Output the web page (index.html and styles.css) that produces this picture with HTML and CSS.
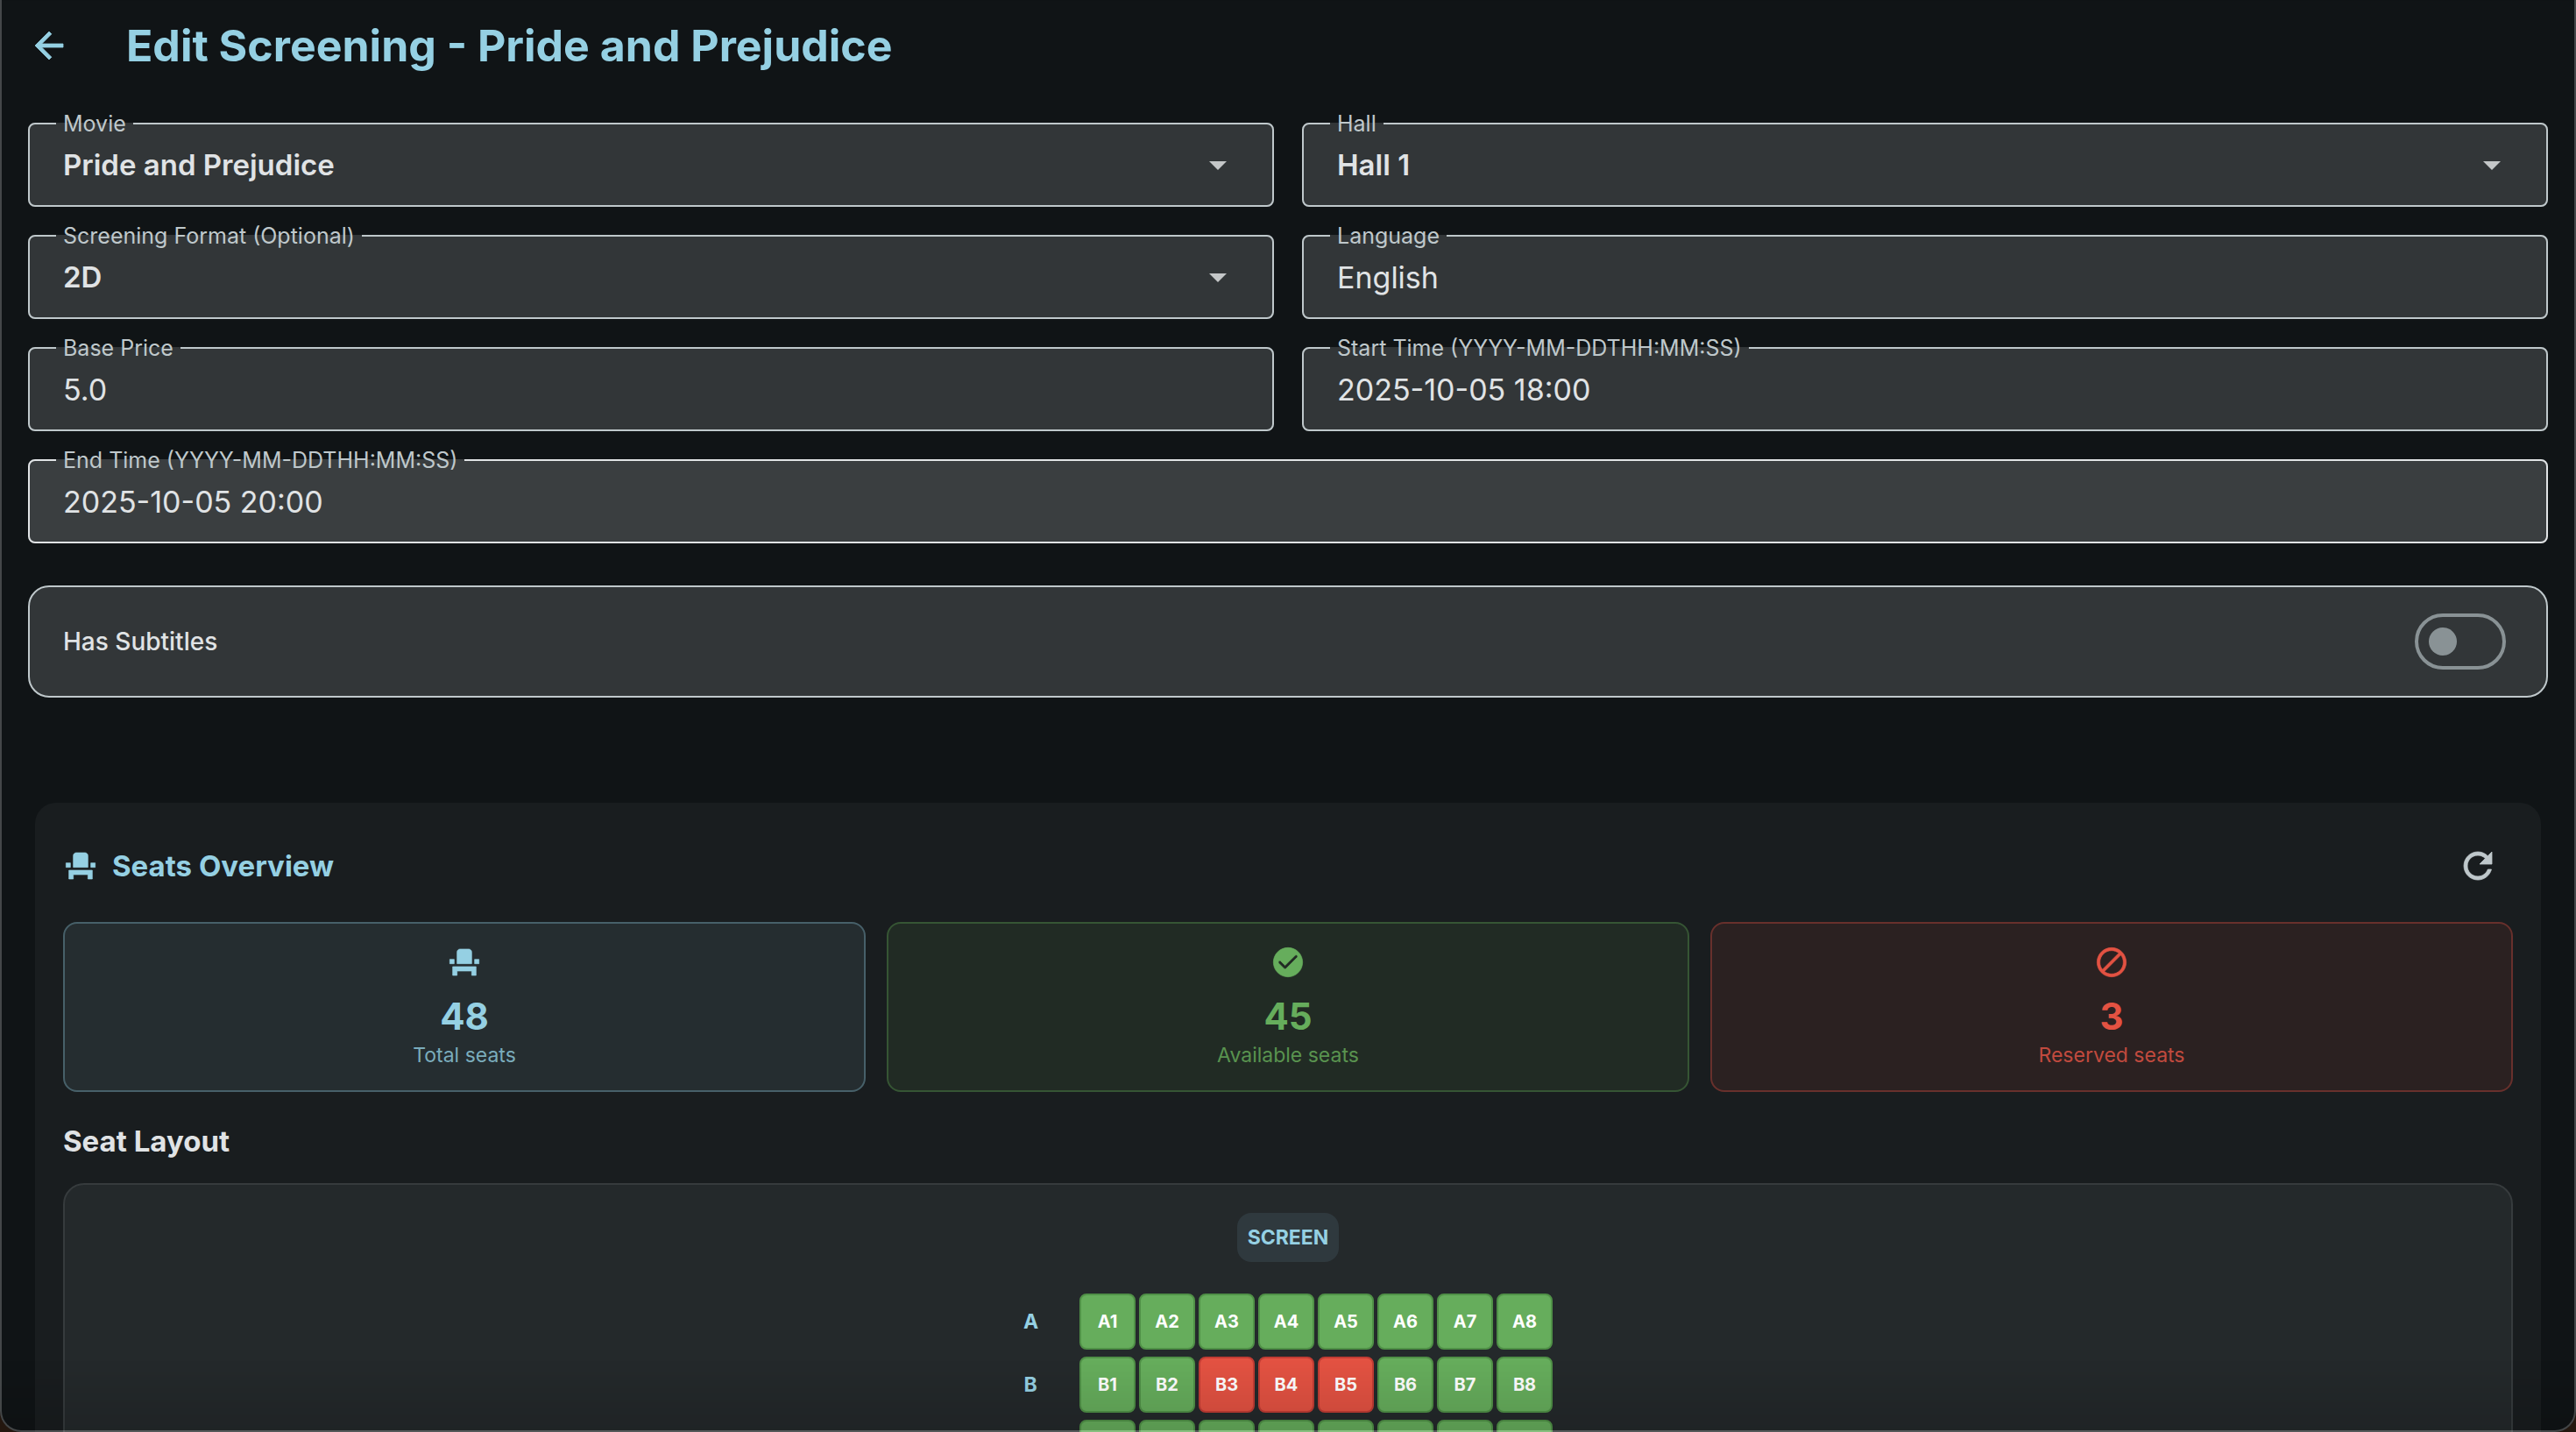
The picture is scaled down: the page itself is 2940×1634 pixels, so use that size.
FILE: index.html
```html
<!DOCTYPE html>
<html lang="en">
<head>
<meta charset="utf-8">
<meta name="viewport" content="width=device-width, initial-scale=1">
<title>Edit Screening</title>
<link rel="stylesheet" href="styles.css">
</head>
<body>
<svg class="sprite" aria-hidden="true">
  <symbol id="seat" viewBox="0 0 24 24"><path d="M4 18v3h3v-3h10v3h3v-6H4zm15-8h3v3h-3zM2 10h3v3H2zm15 3H7V5c0-1.1.9-2 2-2h6c1.1 0 2 .9 2 2v8z"/></symbol>
  <symbol id="caret" viewBox="0 0 24 24"><path d="M7 10l5 5 5-5z"/></symbol>
</svg>
<div class="window">
  <header class="topbar">
    <button class="icon-button back" type="button" aria-label="Back">
      <svg class="icon icon-lg icon-bold" viewBox="0 0 24 24"><path d="M20 11H7.83l5.59-5.59L12 4l-8 8 8 8 1.41-1.41L7.83 13H20v-2z"/></svg>
    </button>
    <h1 class="title">Edit Screening - Pride and Prejudice</h1>
  </header>

  <main>
    <form class="form">
      <fieldset class="field">
        <legend class="legend"><label for="movie">Movie</label></legend>
        <div class="control">
          <select class="value select" id="movie"><option>Pride and Prejudice</option></select>
          <svg class="icon icon-lg caret"><use href="#caret"/></svg>
        </div>
      </fieldset>
      <fieldset class="field">
        <legend class="legend"><label for="hall">Hall</label></legend>
        <div class="control">
          <select class="value select" id="hall"><option>Hall 1</option></select>
          <svg class="icon icon-lg caret"><use href="#caret"/></svg>
        </div>
      </fieldset>
      <fieldset class="field">
        <legend class="legend"><label for="format">Screening Format (Optional)</label></legend>
        <div class="control">
          <select class="value select" id="format"><option>2D</option></select>
          <svg class="icon icon-lg caret"><use href="#caret"/></svg>
        </div>
      </fieldset>
      <fieldset class="field">
        <legend class="legend"><label for="language">Language</label></legend>
        <div class="control"><input class="value" id="language" type="text" value="English"></div>
      </fieldset>
      <fieldset class="field">
        <legend class="legend"><label for="price">Base Price</label></legend>
        <div class="control"><input class="value" id="price" type="text" value="5.0"></div>
      </fieldset>
      <fieldset class="field">
        <legend class="legend"><label for="start">Start Time (YYYY-MM-DDTHH:MM:SS)</label></legend>
        <div class="control"><input class="value" id="start" type="text" value="2025-10-05 18:00"></div>
      </fieldset>
      <fieldset class="field field-wide field-active">
        <legend class="legend"><label for="end">End Time (YYYY-MM-DDTHH:MM:SS)</label></legend>
        <div class="control"><input class="value" id="end" type="text" value="2025-10-05 20:00"></div>
      </fieldset>
      <div class="subtitles">
        <label for="subtitles">Has Subtitles</label>
        <input class="switch" id="subtitles" type="checkbox" role="switch">
      </div>
    </form>

    <section class="overview">
      <div class="overview-head">
        <svg class="icon icon-bold"><use href="#seat"/></svg>
        <h2 class="overview-title">Seats Overview</h2>
        <button class="icon-button refresh" type="button" aria-label="Refresh">
          <svg class="icon icon-lg icon-bold" viewBox="0 0 24 24"><path d="M17.65 6.35C16.2 4.9 14.21 4 12 4c-4.42 0-7.99 3.58-7.99 8s3.57 8 7.99 8c3.73 0 6.84-2.55 7.73-6h-2.08c-.82 2.33-3.04 4-5.65 4-3.31 0-6-2.69-6-6s2.69-6 6-6c1.66 0 3.14.69 4.22 1.78L13 11h7V4l-2.35 2.35z"/></svg>
        </button>
      </div>

      <div class="stats">
        <div class="stat stat-total">
          <svg class="icon icon-bold"><use href="#seat"/></svg>
          <strong class="stat-number">48</strong>
          <span class="stat-label">Total seats</span>
        </div>
        <div class="stat stat-available">
          <svg class="icon icon-bold" viewBox="0 0 24 24"><path d="M12 2C6.48 2 2 6.48 2 12s4.48 10 10 10 10-4.48 10-10S17.52 2 12 2zM9.29 16.29 5.7 12.7c-.39-.39-.39-1.02 0-1.41.39-.39 1.02-.39 1.41 0L10 14.17l6.88-6.88c.39-.39 1.02-.39 1.41 0 .39.39.39 1.02 0 1.41l-7.59 7.59c-.38.39-1.02.39-1.41 0z"/></svg>
          <strong class="stat-number">45</strong>
          <span class="stat-label">Available seats</span>
        </div>
        <div class="stat stat-reserved">
          <svg class="icon icon-bold" viewBox="0 0 24 24"><path d="M12 2C6.48 2 2 6.48 2 12s4.48 10 10 10 10-4.48 10-10S17.52 2 12 2zM4 12c0-4.42 3.58-8 8-8 1.85 0 3.55.63 4.9 1.69L5.69 16.9C4.63 15.55 4 13.85 4 12zm8 8c-1.85 0-3.55-.63-4.9-1.69L18.31 7.1C19.37 8.45 20 10.15 20 12c0 4.42-3.58 8-8 8z"/></svg>
          <strong class="stat-number">3</strong>
          <span class="stat-label">Reserved seats</span>
        </div>
      </div>

      <h3 class="layout-title">Seat Layout</h3>
      <div class="hall">
        <div class="screen">SCREEN</div>
        <div class="rows">
          <div class="row">
            <span class="row-name">A</span>
            <div class="seats">
              <button class="seat" type="button">A1</button>
              <button class="seat" type="button">A2</button>
              <button class="seat" type="button">A3</button>
              <button class="seat" type="button">A4</button>
              <button class="seat" type="button">A5</button>
              <button class="seat" type="button">A6</button>
              <button class="seat" type="button">A7</button>
              <button class="seat" type="button">A8</button>
            </div>
          </div>
          <div class="row">
            <span class="row-name">B</span>
            <div class="seats">
              <button class="seat" type="button">B1</button>
              <button class="seat" type="button">B2</button>
              <button class="seat seat-reserved" type="button">B3</button>
              <button class="seat seat-reserved" type="button">B4</button>
              <button class="seat seat-reserved" type="button">B5</button>
              <button class="seat" type="button">B6</button>
              <button class="seat" type="button">B7</button>
              <button class="seat" type="button">B8</button>
            </div>
          </div>
          <div class="row">
            <span class="row-name"></span>
            <div class="seats">
              <button class="seat" type="button" aria-label="C1"></button>
              <button class="seat" type="button" aria-label="C2"></button>
              <button class="seat" type="button" aria-label="C3"></button>
              <button class="seat" type="button" aria-label="C4"></button>
              <button class="seat" type="button" aria-label="C5"></button>
              <button class="seat" type="button" aria-label="C6"></button>
              <button class="seat" type="button" aria-label="C7"></button>
              <button class="seat" type="button" aria-label="C8"></button>
            </div>
          </div>
        </div>
      </div>
    </section>
  </main>
</div>
</body>
</html>
```
FILE: styles.css
```css
:root {
  --bg: #101416;
  --card: #191d1f;
  --field: #323638;
  --outline: #bfc8cb;
  --text: #e0e3e5;
  --primary: #95d0e3;
  --green: #66ad5c;
  --red: #e35242;
}

* { box-sizing: border-box; }

body {
  margin: 0;
  background: #24170f;
  color: var(--text);
  font-family: Inter, "Liberation Sans", sans-serif;
}

h1, h2, h3 { margin: 0; }

button, input, select { font: inherit; color: inherit; }

.sprite { position: absolute; width: 0; height: 0; }

.icon { display: block; flex: none; width: 40px; height: 40px; fill: currentColor; }
.icon-lg { width: 48px; height: 48px; }
.icon-bold { stroke: currentColor; stroke-width: 0.4; }

.icon-button {
  display: flex;
  flex: none;
  padding: 16px;
  border: 0;
  background: none;
  cursor: pointer;
}

/* App window: scrolls inside a thin frame with rounded lower corners */
.window {
  height: 100vh;
  overflow-x: hidden;
  overflow-y: auto;
  scrollbar-width: none;
  background: var(--bg);
  border-radius: 0 0 24px 24px;
}

.window::after {
  content: "";
  position: fixed;
  inset: 0;
  border: 2px solid rgba(255, 255, 255, 0.22);
  border-top: 0;
  border-radius: 0 0 24px 24px;
  background: linear-gradient(to top, rgba(0, 0, 0, 0.12), transparent 80px);
  pointer-events: none;
}

.topbar { display: flex; align-items: center; padding: 12px 16px 0; }
.back { color: var(--primary); }
.title {
  margin-left: 48px;
  color: var(--primary);
  font-size: 50px;
  font-weight: 700;
  line-height: 64px;
}

.form {
  display: grid;
  grid-template-columns: 1fr 1fr;
  gap: 18px 32px;
  padding: 34px 32px 0;
}

.field {
  min-width: 0;
  margin: 0;
  padding: 0 30px;
  border: 2px solid var(--outline);
  border-radius: 8px;
  background: var(--field);
}
.field-wide { grid-column: 1 / -1; }
.field-active { border-color: var(--text); background: #3a3e40; }

.legend {
  padding: 0 8px;
  color: var(--outline);
  font-size: 25px;
  line-height: 30px;
}

.control { display: grid; height: 78px; padding: 0 8px; }
.control > * { grid-area: 1 / 1; }

.value {
  width: 100%;
  height: 64px;
  padding: 0;
  border: 0;
  outline: 0;
  background: transparent;
  font-size: 34px;
}
.select { appearance: none; font-size: 33px; font-weight: 600; }
.caret {
  justify-self: end;
  margin: 8px 0 0;
  color: #c4c7c8;
  pointer-events: none;
}

.subtitles {
  grid-column: 1 / -1;
  display: flex;
  align-items: center;
  justify-content: space-between;
  height: 128px;
  margin-top: 30px;
  padding: 0 46px 0 38px;
  border: 2px solid var(--outline);
  border-radius: 24px;
  background: var(--field);
  font-size: 28px;
  font-weight: 500;
}

.switch {
  appearance: none;
  display: flex;
  align-items: center;
  width: 104px;
  height: 64px;
  margin: 0;
  padding: 0 12px;
  border: 4px solid #899295;
  border-radius: 32px;
  cursor: pointer;
}
.switch::before {
  content: "";
  width: 32px;
  height: 32px;
  border-radius: 50%;
  background: #899295;
}
.switch:checked { justify-content: flex-end; }

.overview {
  margin: 120px 40px 40px;
  padding: 32px;
  border-radius: 24px;
  background: var(--card);
}

.overview-head { display: flex; align-items: center; margin-bottom: 24px; color: var(--primary); }
.overview-title { margin-left: 16px; font-size: 33px; line-height: 48px; }
.refresh { margin-left: auto; color: var(--outline); }

.stats { display: grid; grid-template-columns: repeat(3, 1fr); gap: 24px; }
.stat {
  display: flex;
  flex-direction: column;
  align-items: center;
  padding: 24px;
  border: 2px solid;
  border-radius: 16px;
}
.stat-number { margin: 16px 0 2px; font-size: 42px; line-height: 52px; }
.stat-label { font-size: 23px; line-height: 32px; }

.stat-total { border-color: #476069; background: #252d30; color: var(--primary); }
.stat-total .stat-label { color: #7aacbc; }
.stat-available { border-color: #365534; background: #212b24; color: var(--green); }
.stat-available .stat-label { color: #59934f; }
.stat-reserved { border-color: #68302c; background: #2b2121; color: var(--red); }
.stat-reserved .stat-label { color: #c14a3e; }

.layout-title { margin: 32px 0 24px; font-size: 33px; font-weight: 700; line-height: 48px; }

.hall {
  display: flex;
  flex-direction: column;
  align-items: center;
  gap: 36px;
  padding: 32px;
  border: 2px solid #363b3d;
  border-radius: 24px;
  background: #24292b;
}

.screen {
  padding: 12px;
  border-radius: 16px;
  background: #2f393e;
  color: var(--primary);
  font-size: 23px;
  font-weight: 700;
  line-height: 32px;
}

.rows { display: grid; gap: 8px; }
.row { display: flex; align-items: center; gap: 48px; }
.row-name {
  width: 16px;
  color: var(--primary);
  font-size: 23px;
  font-weight: 700;
  text-align: center;
}
.seats { display: flex; gap: 4px; }
.seat {
  width: 64px;
  height: 64px;
  padding: 0;
  border: 2px solid #509147;
  border-radius: 8px;
  background: var(--green);
  color: #ffffff;
  font-size: 20px;
  font-weight: 700;
}
.seat-reserved { border-color: #c13c34; background: var(--red); }
```
